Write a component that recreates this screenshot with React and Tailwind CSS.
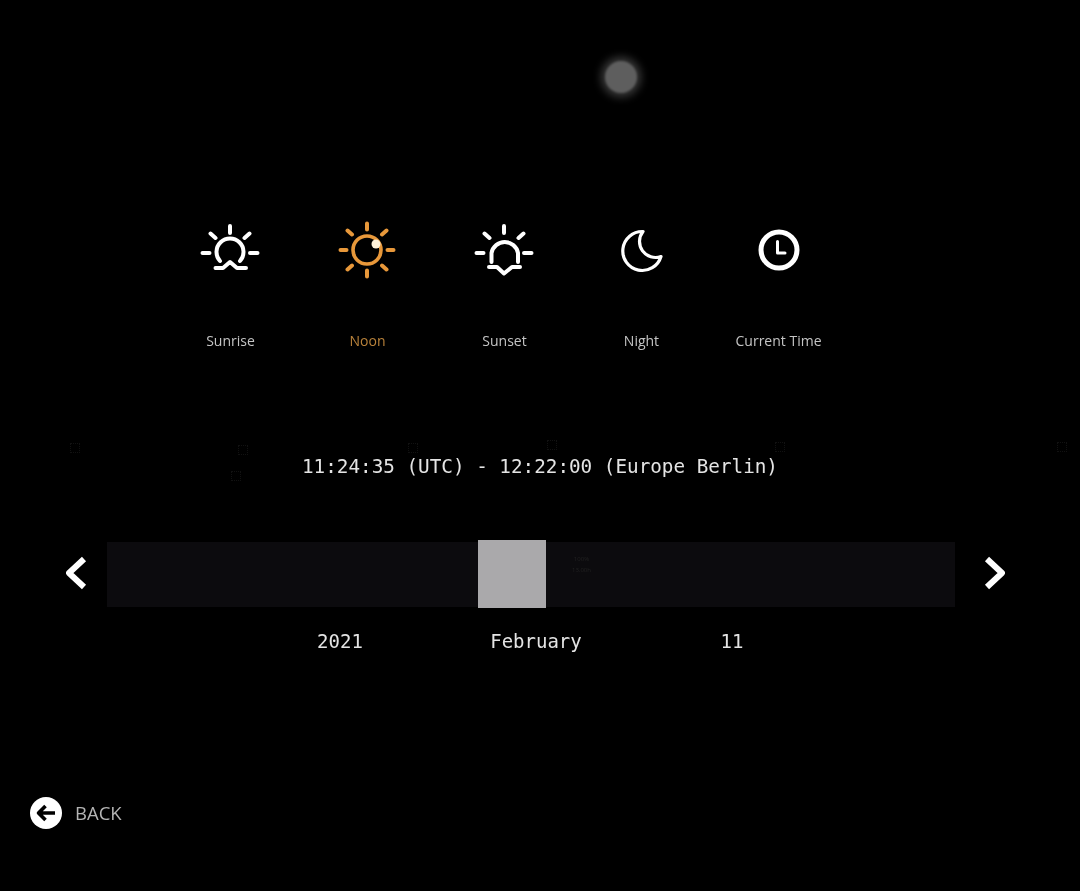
import React from 'react'

const iconStroke = { fill: 'none', stroke: 'currentColor', strokeWidth: 4, strokeLinecap: 'round', strokeLinejoin: 'round' }

function SunriseIcon(){
  return (
    <svg className="-ml-[1px]" width="60" height="60" viewBox="0 0 60 60" {...iconStroke}>
      <path d="M30 6V13M2.5 33H9.5M50 33H57.5M10.5 13.5L15.5 18M49.5 13.5L44.5 18" />
      <path d="M20 41A13.5 13.5 0 1 1 40 41" />
      <path d="M15.5 48H23L30 42L37 48H46" />
    </svg>
  )
}

function NoonIcon(){
  return (
    <svg className="-ml-[1px]" width="60" height="60" viewBox="0 0 60 60" {...iconStroke}>
      <path d="M30 3.5V9.5M30 50.5V56.5M3.5 30H9.5M50.5 30H56.5M10.5 10.5L15 14.5M49.5 10.5L45 14.5M10.5 49.5L15 45.5M49.5 49.5L45 45.5" />
      <circle cx="30" cy="30" r="14" strokeWidth="3.6" />
      <circle cx="39" cy="24" r="4.5" fill="#fff3dc" stroke="none" />
    </svg>
  )
}

function SunsetIcon(){
  return (
    <svg className="-ml-[1px]" width="60" height="60" viewBox="0 0 60 60" {...iconStroke}>
      <path d="M30 6V13M2.5 33H9.5M50 33H57.5M10.5 13.5L15.5 18M49.5 13.5L44.5 18" />
      <path d="M17.5 42V33A13.5 13.5 0 0 1 44 33V42" />
      <path d="M15 47H23L30 53.5L38 47H46" />
    </svg>
  )
}

function MoonIcon(){
  return (
    <svg className="-ml-[2px]" width="60" height="60" viewBox="0 0 60 60" {...iconStroke} strokeWidth="3.2">
      <path d="M32 11.5A19.5 19.5 0 1 0 50 36.5A16 16 0 0 1 32 11.5Z" />
    </svg>
  )
}

function ClockIcon(){
  return (
    <svg width="60" height="60" viewBox="0 0 60 60" {...iconStroke}>
      <circle cx="30" cy="30" r="18" strokeWidth="5" />
      <path d="M28.5 21.5V33H36" strokeWidth="3" />
    </svg>
  )
}

const modes = [
  { label: 'Sunrise', icon: <SunriseIcon /> },
  { label: 'Noon', icon: <NoonIcon />, active: true },
  { label: 'Sunset', icon: <SunsetIcon /> },
  { label: 'Night', icon: <MoonIcon /> },
  { label: 'Current Time', icon: <ClockIcon /> },
]

function Speck({className}){
  return <div className={`absolute w-[10px] h-[10px] border border-dotted border-[#111111] ${className}`} />
}

export default function App(){
  return (
    <div className="relative w-[1080px] h-[891px] bg-black flex flex-col overflow-hidden font-['Open_Sans',sans-serif]">
      <Speck className="left-[70px] top-[443px]" />
      <Speck className="left-[238px] top-[445px]" />
      <Speck className="left-[231px] top-[471px]" />
      <Speck className="left-[408px] top-[443px]" />
      <Speck className="left-[547px] top-[440px]" />
      <Speck className="left-[775px] top-[442px]" />
      <Speck className="left-[1057px] top-[442px]" />

      <div className="mt-[61px] ml-[605px] w-8 h-8 rounded-full bg-[#5e5e5e] shadow-[0_0_8px_4px_#3a3a3a] blur-[1px]" />

      <div className="mt-[127px] ml-[162px] grid grid-cols-[repeat(5,137px)]">
        {modes.map(m => (
          <div key={m.label} className={`flex flex-col items-center ${m.active ? 'text-[#e8983a]' : 'text-white'}`}>
            <div className="blur-[0.6px]">{m.icon}</div>
            <span className={`mt-[51px] text-sm leading-5 blur-[0.7px] ${m.active ? 'text-[#b9823a]' : 'text-[#c4c4c4]'}`}>{m.label}</span>
          </div>
        ))}
      </div>

      <div className="mt-[102px] text-center text-[19.3px] leading-7 text-[#e4e4e4] font-['DejaVu_Sans_Mono',monospace] blur-[0.6px]">
        11:24:35 (UTC) - 12:22:00 (Europe Berlin)
      </div>

      <div className="mt-[59px] flex items-center h-[68px]">
        <svg className="ml-[64px] -mt-[2px] blur-[0.5px]" width="24" height="34" viewBox="0 0 24 34" fill="none" stroke="white" strokeWidth="6" strokeLinejoin="round">
          <path d="M20 3L5 17L20 31" />
        </svg>
        <div className="ml-[19px] w-[848px] h-[65px] bg-[#0c0b0e] flex items-center">
          <div className="ml-[371px] w-[68px] h-[68px] shrink-0 bg-[#aaa9ab] blur-[0.6px]" />
          <div className="ml-[26px] text-center text-[6px] leading-[11px] text-[#222222] blur-[0.6px] -mt-[19px]">
            <div>100%</div>
            <div>13.00h</div>
          </div>
        </div>
        <svg className="ml-[28px] -mt-[2px] blur-[0.5px]" width="24" height="34" viewBox="0 0 24 34" fill="none" stroke="white" strokeWidth="6" strokeLinejoin="round">
          <path d="M4 3L19 17L4 31" />
        </svg>
      </div>

      <div className="mt-[19px] ml-[242px] grid grid-cols-[repeat(3,196px)] text-center text-[19px] leading-7 text-[#e4e4e4] font-['DejaVu_Sans_Mono',monospace] blur-[0.6px]">
        <span>2021</span>
        <span>February</span>
        <span>11</span>
      </div>

      <div className="mt-[142px] ml-[30px] flex items-center blur-[0.6px]">
        <svg width="32" height="32" viewBox="0 0 32 32">
          <circle cx="16" cy="16" r="16" fill="white" />
          <path d="M15.5 9L8.5 16L15.5 23M8.5 16H25" fill="none" stroke="black" strokeWidth="3.6" strokeLinejoin="round" />
        </svg>
        <span className="ml-[13px] text-[18.5px] leading-8 text-[#b4b4b4]">BACK</span>
      </div>
    </div>
  )
}
